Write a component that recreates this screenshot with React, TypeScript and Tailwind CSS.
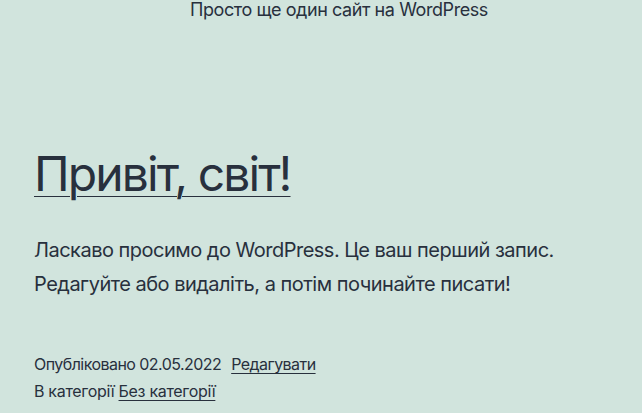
export default function App() {
  return (
    <div
      className="w-[642px] h-[413px] overflow-hidden bg-[#d1e4dd] text-[#28303d]"
      style={{ fontFamily: 'Inter, "Noto Sans", sans-serif' }}
    >
      <header className="flex justify-center pl-[36px] pt-0">
        <p className="text-[18px] leading-[19px] tracking-[-0.42px]">Просто ще один сайт на WordPress</p>
      </header>
      <main className="px-[34px]">
        <h1 className="mt-[125px] text-[48px] leading-[60px] font-normal tracking-[-1.9px]">
          <a href="#" className="underline decoration-1 underline-offset-[5px]">Привіт, світ!</a>
        </h1>
        <div className="mt-[29px] text-[20px] leading-[34px] tracking-[-0.5px]">
          <p>Ласкаво просимо до WordPress. Це ваш перший запис.</p>
          <p>Редагуйте або видаліть, а потім починайте писати!</p>
        </div>
        <div className="mt-[50px] text-[16px] leading-[27px]">
          <p className="tracking-[-0.55px]">
            Опубліковано 02.05.2022{' '}
            <a href="#" className="ml-[6px] underline decoration-1 underline-offset-[3px]">Редагувати</a>
          </p>
          <p className="tracking-[-0.3px]">
            В категорії{' '}
            <a href="#" className="underline decoration-1 underline-offset-[3px]">Без категорії</a>
          </p>
        </div>
      </main>
    </div>
  );
}
